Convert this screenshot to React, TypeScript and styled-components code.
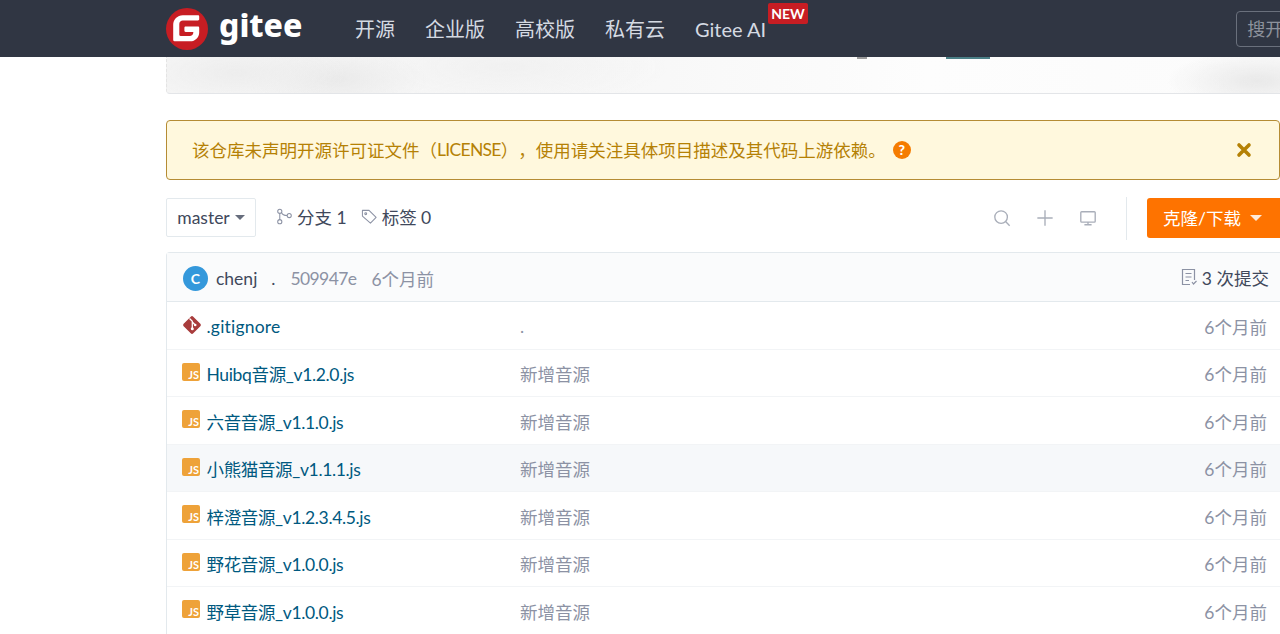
import React from 'react';
import styled, {createGlobalStyle} from 'styled-components';

type FileRowType = {
  name: string
  message: string
  kind: 'git' | 'js'
  hovered?: boolean
}

const files: Array<FileRowType> = [
  {name: '.gitignore', message: '.', kind: 'git'},
  {name: 'Huibq音源_v1.2.0.js', message: '新增音源', kind: 'js'},
  {name: '六音音源_v1.1.0.js', message: '新增音源', kind: 'js'},
  {name: '小熊猫音源_v1.1.1.js', message: '新增音源', kind: 'js', hovered: true},
  {name: '梓澄音源_v1.2.3.4.5.js', message: '新增音源', kind: 'js'},
  {name: '野花音源_v1.0.0.js', message: '新增音源', kind: 'js'},
  {name: '野草音源_v1.0.0.js', message: '新增音源', kind: 'js'},
]

const navItems = ['开源', '企业版', '高校版', '私有云']

const GlobalStyle = createGlobalStyle`
  html, body {
    margin: 0;
    height: 634px;
    overflow: hidden;
    background: #fff;
  }

  body {
    font-family: Lato, "Noto Sans CJK SC", sans-serif;
    font-size: 17.5px;
  }

  * {
    box-sizing: border-box;
  }
`

const GiteeLogo = () => (
  <LogoMark viewBox="0 0 42 42">
    <circle cx="21" cy="21" r="21" fill="#c71d23"/>
    <path
      d="M32 18.600H19.600c-.7 0-1.200.5-1.200 1.200v2.900c0 .7.500 1.200 1.200 1.200h7.700v.6c0 2-1.600 3.500-3.500 3.500h-9.300c-.7 0-1.200-.5-1.200-1.200V16c0-2 1.600-3.500 3.500-3.500H32c.7 0 1.200-.5 1.200-1.200V8.400c0-.7-.5-1.200-1.200-1.200H16.800C11.400 7.200 7.200 11.500 7.200 16.800V32c0 .7.500 1.200 1.200 1.200h16c4.700 0 8.800-3.800 8.800-8.800v-4.600c0-.7-.5-1.200-1.200-1.200z"
      fill="#fff"
    />
  </LogoMark>
)

const FileIcon = ({kind}: { kind: 'git' | 'js' }) => {
  if (kind === 'git') {
    return (
      <GitSvg viewBox="0 0 20 20">
        <rect x="3.2" y="3.2" width="13.6" height="13.6" rx="1.8" fill="#a83c3c" transform="rotate(45 10 10)"/>
        <path d="M7.500 3.500 10.300 6.300V13.500M10.300 7 13 9.800" stroke="#fff" strokeWidth="1.3" fill="none"/>
        <circle cx="10.300" cy="13.800" r="1.500" fill="#fff"/>
        <circle cx="13.200" cy="10" r="1.300" fill="#fff"/>
      </GitSvg>
    )
  }
  return <JsBadge>JS</JsBadge>
}

const App = () => {
  const rows = files.map((f) => (
    <FileRow key={f.name} $hovered={f.hovered}>
      <FileIconCell><FileIcon kind={f.kind}/></FileIconCell>
      <FileName $tight={f.kind === 'js'}>{f.name}</FileName>
      <CommitMessage>{f.message}</CommitMessage>
      <FileTime>6个月前</FileTime>
    </FileRow>
  ))

  return (
    <Page>
      <GlobalStyle/>
      <Header>
        <Logo>
          <GiteeLogo/>
          <LogoText>gitee</LogoText>
        </Logo>
        <Nav>
          {navItems.map((item) => <NavItem key={item}>{item}</NavItem>)}
          <NavItem>
            Gitee AI
            <NewBadge>NEW</NewBadge>
          </NavItem>
        </Nav>
        <SearchBox>搜开源</SearchBox>
      </Header>

      <Container>
        <Banner>
          <BannerScrap $width={10}/>
          <BannerScrap $width={44} $dark/>
        </Banner>

        <Alert>
          <AlertText>
            该仓库未声明开源许可证文件（<LicenseWord>LICENSE</LicenseWord>），使用请关注具体项目描述及其代码上游依赖。
            <HelpDot>?</HelpDot>
          </AlertText>
          <CloseIcon viewBox="0 0 16 16">
            <path d="M3 3 13 13M13 3 3 13" stroke="#b58105" strokeWidth="3.6" strokeLinecap="round"/>
          </CloseIcon>
        </Alert>

        <Toolbar>
          <BranchSelect>master<Caret/></BranchSelect>
          <RepoStat>
            <StatIcon viewBox="0 0 18 18">
              <circle cx="4" cy="3.5" r="2.2"/>
              <circle cx="4" cy="14.5" r="2.2"/>
              <circle cx="14" cy="8" r="2.2"/>
              <path d="M4 5.700V12.300M5.800 4.800C7 8 9 8 11.800 8"/>
            </StatIcon>
            分支 1
          </RepoStat>
          <RepoStat>
            <StatIcon viewBox="0 0 18 18">
              <path d="M1.500 2.500H8.500L16 10 10 16 1.500 8.500Z" strokeLinejoin="round"/>
              <circle cx="5" cy="6" r="1"/>
            </StatIcon>
            标签 0
          </RepoStat>
          <ToolbarRight>
            <ToolIcon viewBox="0 0 20 20">
              <circle cx="9" cy="9" r="7"/>
              <path d="M14 14 18.500 18.500"/>
            </ToolIcon>
            <ToolIcon viewBox="0 0 20 20">
              <path d="M10 1.500V18.500M1.500 10H18.500"/>
            </ToolIcon>
            <ToolIcon viewBox="0 0 20 20">
              <rect x="2" y="3" width="16" height="11.5" rx="1"/>
              <path d="M10 14.500V17.500M6 17.500H14"/>
            </ToolIcon>
            <Divider/>
            <CloneButton>克隆/下载<CloneCaret/></CloneButton>
          </ToolbarRight>
        </Toolbar>

        <FileTable>
          <CommitHeader>
            <Avatar>C</Avatar>
            <Author>chenj</Author>
            <CommitDot>.</CommitDot>
            <CommitHash>509947e</CommitHash>
            <CommitMeta>6个月前</CommitMeta>
            <CommitCount>
              <CommitIcon viewBox="0 0 16 18">
                <path d="M13.500 12V1.500H1.500V16.500H9M4.500 5.500H10.500M4.500 9H10.500M4.500 12.500H8M11 14 12.500 16 15.500 13"/>
              </CommitIcon>
              3 次提交
            </CommitCount>
          </CommitHeader>
          {rows}
        </FileTable>
      </Container>
    </Page>
  )
}

export default App

const Page = styled.div`
  width: 1280px;
  height: 634px;
  overflow: hidden;
  color: #40485b;
`

const Header = styled.header`
  height: 57px;
  padding-left: 166px;
  background: #303643;
  display: flex;
  align-items: center;
`

const Logo = styled.div`
  display: flex;
  align-items: center;
  gap: 11px;
  width: 189px;
  flex-shrink: 0;
`

const LogoMark = styled.svg`
  width: 42px;
  height: 42px;
  flex-shrink: 0;
`

const LogoText = styled.span`
  font-family: "Noto Sans", sans-serif;
  font-size: 32px;
  font-weight: 800;
  line-height: 42px;
  margin-top: -7px;
  color: #fff;
`

const Nav = styled.nav`
  display: flex;
  align-items: center;
  gap: 30px;
  flex-shrink: 0;
  white-space: nowrap;
`

const NavItem = styled.span`
  position: relative;
  font-size: 20px;
  line-height: 26px;
  margin-top: 1px;
  color: #d5dae2;
`

const NewBadge = styled.span`
  position: absolute;
  left: 73px;
  top: -13px;
  width: 40px;
  height: 21px;
  border-radius: 2px;
  background: #c71d23;
  color: #fff;
  font-size: 14px;
  font-weight: 700;
  line-height: 21px;
  text-align: center;
`

const SearchBox = styled.div`
  margin-left: 470px;
  flex-shrink: 0;
  width: 140px;
  height: 36px;
  padding-left: 10px;
  border: 1px solid #6a707c;
  border-radius: 4px;
  color: #8d929c;
  font-size: 18px;
  line-height: 34px;
  white-space: nowrap;
`

const Container = styled.main`
  width: 1114px;
  margin-left: 166px;
`

const Banner = styled.div`
  height: 37px;
  display: flex;
  align-items: flex-start;
  gap: 79px;
  padding-left: 690px;
  border-bottom: 1px solid #e3e5e8;
  border-left: 1px dashed #e4e4e4;
  border-bottom-left-radius: 4px;
  background:
    radial-gradient(ellipse 110px 34px at 70px 16px, #ededed, transparent),
    radial-gradient(ellipse 90px 34px at 170px 22px, #eaeaea, transparent),
    radial-gradient(ellipse 160px 40px at 340px 10px, #f1f1f1, transparent),
    radial-gradient(ellipse 90px 30px at 1090px 24px, #e9e9e9, transparent),
    linear-gradient(90deg, #f6f6f6 0, #f8f8f8 500px, #fdfdfd 760px, #fbfbfb 100%);
`

const BannerScrap = styled.span<{ $width: number; $dark?: boolean }>`
  width: ${(p) => p.$width}px;
  height: 2px;
  background: ${(p) => (p.$dark ? '#4a7f86' : '#9a9a9a')};
`

const Alert = styled.div`
  height: 60px;
  margin-top: 26px;
  padding: 0 27px 0 25px;
  display: flex;
  align-items: center;
  justify-content: space-between;
  border: 1px solid #b58c34;
  border-radius: 4px;
  background: #fff8dd;
`

const AlertText = styled.div`
  display: flex;
  align-items: center;
  margin-top: -1px;
  color: #b58105;
  font-size: 17.5px;
  text-spacing-trim: space-all;
`

const LicenseWord = styled.span`
  letter-spacing: -0.7px;
`

const HelpDot = styled.span`
  width: 18px;
  height: 18px;
  margin-left: 7px;
  margin-top: 1px;
  border-radius: 50%;
  background: #f57c00;
  color: #fff;
  font-size: 14px;
  font-weight: 900;
  line-height: 18px;
  text-align: center;
`

const CloseIcon = styled.svg`
  width: 16px;
  height: 16px;
`

const Toolbar = styled.div`
  height: 40px;
  margin-top: 18px;
  display: flex;
  align-items: center;
`

const BranchSelect = styled.div`
  width: 90px;
  height: 39px;
  margin-bottom: 1px;
  padding-bottom: 1px;
  display: flex;
  align-items: center;
  justify-content: center;
  gap: 5px;
  border: 1px solid #e3e9ed;
  border-radius: 2px;
  color: #40485b;
`

const Caret = styled.span`
  margin-top: 1px;
  border-left: 5px solid transparent;
  border-right: 5px solid transparent;
  border-top: 5px solid #666d7c;
`

const RepoStat = styled.div`
  display: flex;
  align-items: center;
  gap: 4px;
  margin-left: 20px;
  margin-bottom: 3px;
  font-size: 17.5px;
  color: #40485b;

  & + & {
    margin-left: 14px;
  }
`

const StatIcon = styled.svg`
  width: 17px;
  height: 17px;
  fill: none;
  stroke: #8c92a4;
  stroke-width: 1.1;
`

const ToolbarRight = styled.div`
  margin-left: auto;
  display: flex;
  align-items: center;
  gap: 25px;
`

const ToolIcon = styled.svg`
  width: 18px;
  height: 18px;
  fill: none;
  stroke: #a9aeb9;
  stroke-width: 1.5;
`

const Divider = styled.span`
  width: 1px;
  height: 43px;
  margin: 0 -5px 0 4px;
  background: #e3e9ed;
`

const CloneButton = styled.div`
  width: 133px;
  height: 40px;
  padding: 0 0 2px 16px;
  display: flex;
  align-items: center;
  gap: 9px;
  border-radius: 3px 0 0 3px;
  background: #fe7300;
  color: #fff;
  font-size: 17.5px;
`

const CloneCaret = styled.span`
  margin-top: 2px;
  border-left: 6px solid transparent;
  border-right: 6px solid transparent;
  border-top: 6px solid #fff;
  opacity: 0.85;
`

const FileTable = styled.section`
  margin-top: 14px;
  border: 1px solid #e3e9ed;
  border-right: none;
  border-radius: 4px 0 0 0;
`

const CommitHeader = styled.div`
  height: 49px;
  padding: 2px 11px 0 16px;
  display: flex;
  align-items: center;
  background: #fafbfc;
  border-bottom: 1px solid #e3e9ed;
`

const Avatar = styled.span`
  width: 25px;
  height: 25px;
  border-radius: 50%;
  background: #3498db;
  color: #fff;
  font-size: 14px;
  font-weight: 700;
  line-height: 25px;
  text-align: center;
`

const Author = styled.span`
  margin-left: 8px;
  color: #40485b;
`

const CommitDot = styled.span`
  margin-left: 14px;
  color: #40485b;
`

const CommitHash = styled.span`
  margin-left: 15px;
  letter-spacing: -0.6px;
  color: #8c92a4;
`

const CommitMeta = styled.span`
  margin-left: 15px;
  color: #8c92a4;
`

const CommitCount = styled.span`
  margin-left: auto;
  margin-top: -2px;
  display: flex;
  align-items: center;
  gap: 5px;
  color: #40485b;
`

const CommitIcon = styled.svg`
  width: 16px;
  height: 18px;
  fill: none;
  stroke: #8c92a4;
  stroke-width: 1.2;
`

const FileRow = styled.div<{ $hovered?: boolean }>`
  height: 47.5px;
  padding: 2px 13px 0 15px;
  display: flex;
  align-items: center;
  border-bottom: 1px solid #f2f4f6;
  background: ${(p) => (p.$hovered ? '#f6f8fa' : '#fff')};
`

const FileIconCell = styled.span`
  width: 24.5px;
  height: 20px;
  margin-top: -2px;
  flex-shrink: 0;
`

const GitSvg = styled.svg`
  width: 20px;
  height: 20px;
  display: block;
`

const JsBadge = styled.span`
  display: flex;
  align-items: flex-end;
  justify-content: flex-end;
  width: 18px;
  height: 18px;
  padding: 0 1px 1px 0;
  border-radius: 2px;
  background: #eea239;
  color: #fff;
  font-size: 11px;
  font-weight: 700;
  line-height: 10px;
`

const FileName = styled.a<{ $tight?: boolean }>`
  width: 313.5px;
  flex-shrink: 0;
  letter-spacing: ${(p) => (p.$tight ? '-0.35px' : '0.2px')};
  color: #005980;
`

const CommitMessage = styled.span`
  color: #8c92a4;
`

const FileTime = styled.span`
  margin-left: auto;
  color: #8c92a4;
`
